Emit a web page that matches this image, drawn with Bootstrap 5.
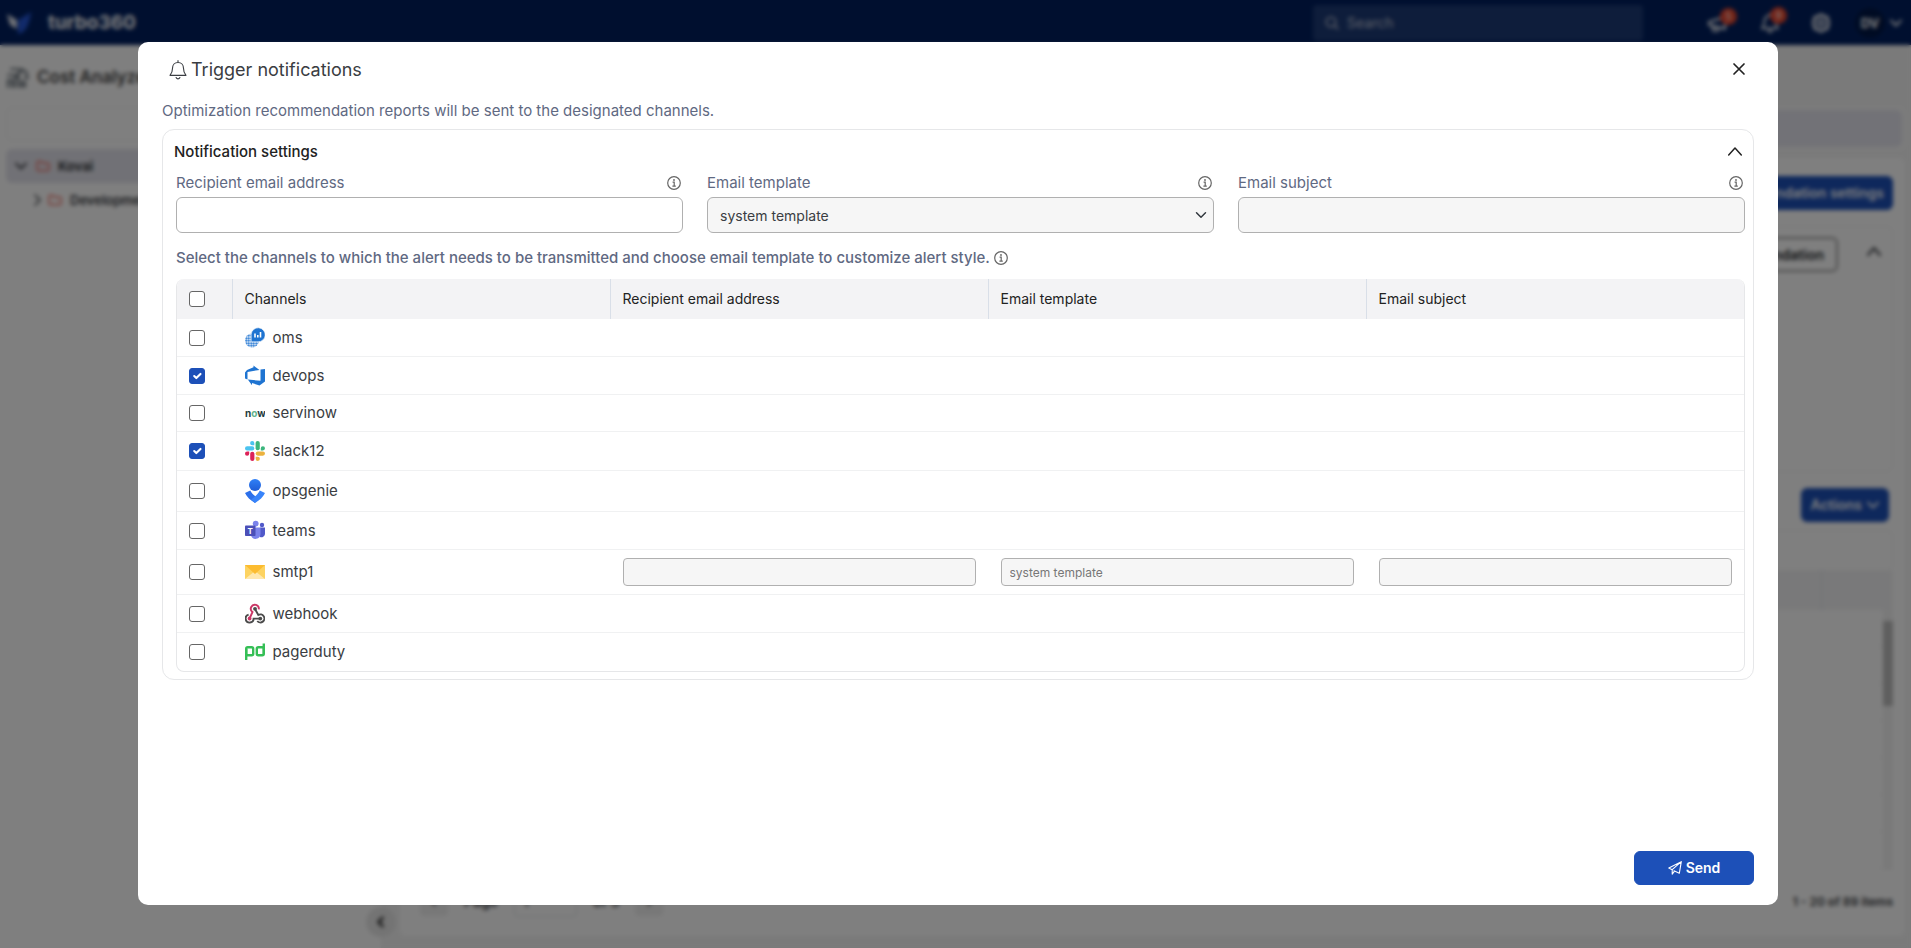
<!DOCTYPE html>
<html lang="en">
<head>
<meta charset="utf-8">
<meta name="viewport" content="width=device-width, initial-scale=1">
<title>Trigger notifications - turbo360</title>
<link href="https://cdn.jsdelivr.net/npm/bootstrap@5.3.0/dist/css/bootstrap.min.css" rel="stylesheet">
<style>
  :root { --ink: #3a3d42; --slate: #5f6982; --brand: #1d50b8; --line: #e6e7e9; }
  body { font-family: Inter, "Open Sans", sans-serif; font-size: 14px; line-height: 20px; color: var(--ink); background: #fff; }
  svg { display: block; flex: none; }
  .stroke { fill: none; stroke: currentColor; stroke-linecap: round; stroke-linejoin: round; }

  /* application behind the dialog */
  .app { height: 100vh; }
  .topbar { height: 45px; background: #001f5f; color: #fff; padding: 0 8px 0 6px; }
  .brand-name { font-size: 19px; }
  .top-search { width: 330px; height: 36px; background: #1c3a76; color: #c0c6d6; margin-right: 64px; border-radius: 4px; }
  .top-search input { background: transparent; border: 0; color: inherit; padding: 0; }
  .top-search input::placeholder { color: #c0c6d6; opacity: 1; }
  .count { position: absolute; top: -6px; right: -8px; width: 17px; height: 17px; border-radius: 50%; background: #e8452c; font-size: 10px; line-height: 17px; text-align: center; }
  .avatar { width: 30px; height: 30px; background: #001746; font-size: 13px; }
  .sidebar { width: 381px; background: #fff; padding: 18px 0 0 6px; }
  .page-name { font-size: 17px; line-height: 28px; color: #444; }
  .side-search { height: 34px; border-color: #f0f0f0; }
  .tree-row { height: 34px; border-radius: 6px; font-size: 13px; }
  .tree-row.active { background: #e3e3ec; }
  .tree-row svg.folder { color: #f0685c; }
  .main-pane { background: #f5f5f5; padding: 62px 6px 12px 19px; }
  .crumb { height: 43px; background: #f9f9f9; padding: 3px; }
  .crumb-fill { background: #e5e5ee; }
  .panel { background: #fff; border-radius: 6px; padding: 18px 12px 15px; }
  .btn-brand { --bs-btn-color: #fff; --bs-btn-bg: var(--brand); --bs-btn-border-color: var(--brand); --bs-btn-hover-color: #fff; --bs-btn-hover-bg: #17439c; --bs-btn-font-size: 14px; --bs-btn-border-radius: 6px; height: 34px; line-height: 20px; font-weight: 600; }
  .box { border: 1px solid #f1f1f1; border-radius: 6px; }
  .summary { height: 246px; padding: 10px 6px; }
  .filter-strip { height: 41px; }
  .btn-ghost { border: 2px solid #999; border-radius: 6px; height: 35px; font-weight: 600; line-height: 20px; font-size: 14px; }
  .grid-head { height: 39px; background: #f3f3f5; padding-right: 71px; }
  .grid-body { flex: 1 1 0; background: repeating-linear-gradient(#fff 0 36px, #f8f8f8 36px 37px); }
  .scroll-track { width: 10px; background: #f4f4f4; padding-top: 11px; }
  .scroll-thumb { height: 85px; background: #bdbdbd; }
  .pager-btn { width: 28px; height: 28px; background: #f0f0f0; border: 0; border-radius: 4px; }
  .pager-input { width: 63px; }
  .pager-total { font-size: 12px; }
  .collapse-btn { position: absolute; right: -15px; bottom: 11px; width: 30px; height: 30px; border: 0; border-radius: 50%; background: #e8e8e8; }

  /* dialog */
  .veil { background: rgba(0, 0, 0, .5); backdrop-filter: blur(2px); padding: 42px 133px 43px 138px; z-index: 1055; }
  .dialog { background: #fff; border-radius: 10px; padding: 16px 24px 20px; }
  .dialog-head { padding: 0 7px; margin-bottom: 17px; height: 24px; }
  .dialog-title { font-size: 18px; line-height: 24px; font-weight: 400; }
  .plain-btn { border: 0; background: transparent; padding: 0; color: #222; }
  .intro { color: var(--slate); font-size: 15px; line-height: 24px; margin-bottom: 6px; }
  .settings { border: 1px solid var(--line); border-radius: 12px; padding: 12px 8px 7px 13px; }
  .settings-head { margin-bottom: 11px; padding-right: 3px; }
  .settings-title { font-size: 15px; line-height: 20px; color: #222; margin-left: -2px; }
  .label-row { padding-right: 2px; }
  .field-label { color: var(--slate); font-size: 15px; }
  .info-dot { color: #666; }
  .field { height: 36px; border: 1px solid #b0b0b0; border-radius: 6px; font-size: 14px; padding: 0 12px; color: var(--ink); background-color: #fff; }
  .field:disabled, .field.muted { background-color: #f6f6f6; opacity: 1; }
  select.field { background-position: right 6px center; background-size: 12px; }
  .field.compact { height: 28px; border-radius: 4px; font-size: 12px; padding: 0 8px; color: #777; }
  .hint { color: var(--slate); font-size: 15px; line-height: 20px; margin: 15px 0 11px; }
  .channel-wrap { border: 1px solid var(--line); border-top: 0; border-radius: 8px; overflow: hidden; }
  .channel-table { table-layout: fixed; margin: 0; color: var(--ink); border-color: #f0f1f2; }
  .channel-table > :not(caption) > * > * { padding: 8px 12px; vertical-align: middle; }
  .channel-table > thead > tr > th { height: 40px; background: #f3f3f5; font-weight: 400; font-size: 14px; padding: 0 12px; border-bottom: 0; color: #222; }
  .channel-table th + th { border-left: 1px solid #d9dfe8; }
  .channel-table td + td { border-left: 1px solid transparent; }
  .channel-table td { font-size: 15px; }
  .channel-table tbody tr:last-child td { border-bottom-color: transparent; }
  .channel-table .pick { width: 55px; }
  .tick.form-check-input { float: none; display: block; width: 16px; height: 16px; margin: 0; border: 1px solid #666; border-radius: 3px; }
  .tick.form-check-input:checked { background-color: var(--brand); border-color: var(--brand); }
  .send-btn { width: 120px; }
</style>
</head>
<body class="overflow-hidden">

<svg width="0" height="0" class="position-absolute" aria-hidden="true">
  <symbol id="i-info" viewBox="0 0 14 14"><circle cx="7" cy="7" r="6.3" fill="none" stroke="currentColor" stroke-width="1.2"/><circle cx="7" cy="4" r=".9" fill="currentColor"/><path d="M5.6 6.2h1.6v4M5.4 10.2h3.4" fill="none" stroke="currentColor" stroke-width="1.2"/></symbol>
  <symbol id="i-down" viewBox="0 0 14 14"><path d="M2 4.5l5 5 5-5" class="stroke" stroke-width="1.8"/></symbol>
  <symbol id="i-bell" viewBox="0 0 16 18"><path d="M8 .6v1.600M8 2.200c-3 0-4.900 2.200-4.900 5 0 3.600-1 5-2.300 6.600h14.400c-1.300-1.600-2.300-3-2.300-6.600 0-2.800-1.900-5-4.900-5z" class="stroke"/><path d="M6.300 15.800c.3.700.9 1.200 1.700 1.200s1.400-.5 1.700-1.200" class="stroke"/></symbol>
  <symbol id="i-folder" viewBox="0 0 14 12"><path d="M1 2.500a1 1 0 0 1 1-1h3l1.500 1.700H12a1 1 0 0 1 1 1v5.300a1 1 0 0 1-1 1H2a1 1 0 0 1-1-1z" class="stroke" stroke-width="1.400"/></symbol>
</svg>

<div class="app d-flex flex-column" aria-hidden="true">
  <header class="topbar d-flex align-items-center">
    <svg width="26" height="24" viewBox="0 0 26 24"><path d="M1 3l10 6v9L4 14z" fill="#dfe3ee"/><path d="M25 1L12 9v14c7-1 11-8 13-22z" fill="#2456d6"/></svg>
    <span class="brand-name fw-bold ms-3 me-auto">turbo360</span>
    <div class="top-search d-flex align-items-center gap-2 px-2">
      <svg class="ms-1" width="14" height="14" viewBox="0 0 14 14"><circle cx="6" cy="6" r="4.700" class="stroke" stroke-width="1.600"/><path d="M9.500 9.500L13 13" class="stroke" stroke-width="1.600"/></svg>
      <input type="search" placeholder="Search" aria-label="Search" tabindex="-1">
    </div>
    <div class="d-flex align-items-center">
      <span class="position-relative me-4"><svg width="22" height="18" viewBox="0 0 22 18"><path d="M2 8l16-5v12L2 11zM6 12v3a2.500 2.500 0 0 0 5 1v-3" class="stroke" stroke-width="2"/></svg><span class="count">5</span></span>
      <span class="position-relative ms-2 me-4"><svg width="18" height="20"><use href="#i-bell" stroke-width="1.600"/></svg><span class="count">9</span></span>
      <svg class="ms-2 me-4" width="20" height="20" viewBox="0 0 20 20"><path d="M10 1.500l2.500 1.700L16 4l1 3 .6 3-.6 3-1 3-3.500.8L10 18.500l-2.500-1.700L4 16l-1-3-.6-3L3 7l1-3 3.500-.8z" class="stroke" stroke-width="2.600"/><circle cx="10" cy="10" r="3" class="stroke" stroke-width="2"/></svg>
      <span class="avatar rounded-circle fw-bold d-flex align-items-center justify-content-center">DV</span>
      <svg class="ms-1" width="14" height="14"><use href="#i-down"/></svg>
    </div>
  </header>

  <div class="d-flex flex-grow-1">
    <aside class="sidebar position-relative">
      <div class="d-flex align-items-center gap-2 mb-3">
        <svg width="23" height="24" viewBox="0 0 23 24" class="text-secondary"><path d="M2 22v-7h4v7M9 22V12h4v10M16 22v-5h3v5M2 10h9l5-6M5 4h8M13 9a4 4 0 1 1 6 4h3" class="stroke" stroke-width="2.200"/></svg>
        <div class="page-name fw-semibold">Cost Analyzer</div>
      </div>
      <input class="form-control side-search mb-2" aria-label="Search resources" tabindex="-1">
      <div class="tree-row active d-flex align-items-center gap-1 fw-bold ps-2"><svg width="14" height="14"><use href="#i-down"/></svg><svg class="folder ms-1 me-1" width="14" height="12"><use href="#i-folder"/></svg>Kovai</div>
      <div class="tree-row d-flex align-items-center gap-1 fw-semibold ps-4"><svg width="14" height="14" viewBox="0 0 14 14"><path d="M5 2l5 5-5 5" class="stroke" stroke-width="1.500"/></svg><svg class="folder me-1" width="14" height="12"><use href="#i-folder"/></svg>Development</div>
      <button class="collapse-btn d-flex align-items-center justify-content-center" tabindex="-1" aria-label="Collapse"><svg width="12" height="12" viewBox="0 0 14 14"><path d="M9 2L4 7l5 5" class="stroke" stroke-width="2.400"/></svg></button>
    </aside>

    <main class="main-pane flex-grow-1 d-flex flex-column">
      <div class="crumb rounded-2 d-flex mb-2"><div class="crumb-fill rounded-2 flex-grow-1"></div></div>
      <section class="panel flex-grow-1 d-flex flex-column">
        <button class="btn btn-brand align-self-end px-2 mb-3" tabindex="-1">Recommendation settings</button>
        <div class="box summary d-flex justify-content-end align-items-start gap-4">
          <button class="btn btn-ghost py-1" tabindex="-1">Recommendation</button>
          <svg class="ms-1 mt-2 me-1" width="16" height="14" viewBox="0 0 14 14"><path d="M1 10l6-7 6 7" class="stroke" stroke-width="2"/></svg>
        </div>
        <div class="d-flex justify-content-end gap-2 pt-3 pb-2 pe-1">
          <button class="btn btn-brand px-2 d-flex align-items-center" tabindex="-1">Actions <svg class="ms-1" width="14" height="14"><use href="#i-down"/></svg></button>
        </div>
        <div class="box filter-strip"></div>
        <div class="grid-head d-flex justify-content-end"><span class="border-end"></span></div>
        <div class="grid-body d-flex justify-content-end"><div class="scroll-track"><div class="scroll-thumb"></div></div></div>
        <div class="d-flex align-items-center gap-3 fw-semibold mt-3 ps-2">
          <button class="pager-btn" tabindex="-1">‹</button>
          <span>Page</span><input class="form-control form-control-sm pager-input" value="1" aria-label="Page number" tabindex="-1"><span>of 5</span>
          <button class="pager-btn" tabindex="-1">›</button>
          <span class="pager-total ms-auto">1 - 20 of 89 items</span>
        </div>
        <div class="pb-1"></div>
      </section>
    </main>
  </div>
</div>

<div class="veil position-fixed top-0 start-0 w-100 h-100 d-flex">
  <div class="dialog flex-grow-1 d-flex flex-column" role="dialog" aria-modal="true" aria-labelledby="dlg-title">
    <div class="dialog-head d-flex align-items-center">
      <svg class="me-1" width="18" height="20"><use href="#i-bell"/></svg>
      <h1 class="dialog-title mb-0 me-auto" id="dlg-title">Trigger notifications</h1>
      <button class="plain-btn" type="button" aria-label="Close"><svg width="16" height="16" viewBox="0 0 16 16"><path d="M3 2l10 10M13 2L3 12" class="stroke" stroke-width="1.700"/></svg></button>
    </div>
    <p class="intro">Optimization recommendation reports will be sent to the designated channels.</p>

    <section class="settings">
      <div class="settings-head d-flex align-items-center justify-content-between">
        <h2 class="settings-title mb-0">Notification settings</h2>
        <button class="plain-btn" type="button" aria-label="Collapse notification settings"><svg width="14" height="14" viewBox="0 0 14 14"><path d="M.7 10L7 3l6.300 7" class="stroke" stroke-width="1.500"/></svg></button>
      </div>

      <div class="row gx-4">
        <div class="col">
          <div class="label-row d-flex align-items-center justify-content-between mb-1">
            <label class="field-label" for="rcpt">Recipient email address</label><svg class="info-dot" width="14" height="14"><use href="#i-info"/></svg>
          </div>
          <input class="form-control field" id="rcpt" type="email">
        </div>
        <div class="col">
          <div class="label-row d-flex align-items-center justify-content-between mb-1">
            <label class="field-label" for="tmpl">Email template</label><svg class="info-dot" width="14" height="14"><use href="#i-info"/></svg>
          </div>
          <select class="form-select field muted" id="tmpl"><option>system template</option></select>
        </div>
        <div class="col">
          <div class="label-row d-flex align-items-center justify-content-between mb-1">
            <label class="field-label" for="subj">Email subject</label><svg class="info-dot" width="14" height="14"><use href="#i-info"/></svg>
          </div>
          <input class="form-control field" id="subj" type="text" disabled>
        </div>
      </div>

      <div class="hint d-flex align-items-center gap-1 fw-medium"><span class="hint-text">Select the channels to which the alert needs to be transmitted and choose email template to customize alert style.</span><svg class="info-dot" width="14" height="14"><use href="#i-info"/></svg></div>

      <div class="channel-wrap">
        <table class="table channel-table">
          <thead>
            <tr><th class="pick" scope="col"><input class="form-check-input tick" type="checkbox" aria-label="Select all channels"></th><th scope="col">Channels</th><th scope="col">Recipient email address</th><th scope="col">Email template</th><th scope="col">Email subject</th></tr>
          </thead>
          <tbody>
            <tr><td><input class="form-check-input tick" type="checkbox" id="c1"></td><td><label class="d-flex align-items-center gap-2" for="c1">
              <svg width="20" height="21" viewBox="0 0 20 21"><defs><pattern id="dots" width="2.500" height="2.500" patternUnits="userSpaceOnUse"><circle cx="1.250" cy="1.250" r="1.050" fill="#1f74d1"/></pattern></defs><circle cx="7" cy="13.500" r="7" fill="url(#dots)"/><path d="M6.200 14.800V7.200A7 7 0 1 1 13 14.800z" fill="#1f74d1" stroke="#fff" stroke-width=".6"/><path d="M10 6.500v4M12.800 8v2.500M15.500 5v5.500" stroke="#fff" stroke-width="1.600"/></svg>oms</label></td><td></td><td></td><td></td></tr>
            <tr><td><input class="form-check-input tick" type="checkbox" id="c2" checked></td><td><label class="d-flex align-items-center gap-2" for="c2">
              <svg width="20" height="21" viewBox="0 0 20 21"><path d="M0 7.500L2 5l6.500-2.700V.6l6 4.300L2.500 7v7.500L0 13.500zM15.500 4.500L20 4v12.500L14.500 20.500 7 18v2.300L2.800 14.500l12.700 1.300z" fill="#1f74d1"/></svg>devops</label></td><td></td><td></td><td></td></tr>
            <tr><td><input class="form-check-input tick" type="checkbox" id="c3"></td><td><label class="d-flex align-items-center gap-2" for="c3">
              <svg width="20" height="20" viewBox="0 0 20 20"><text x="0" y="14" font-family="Inter, sans-serif" font-weight="700" font-size="10" fill="#1d3b3f">n<tspan fill="#62b38d">o</tspan>w</text></svg>servinow</label></td><td></td><td></td><td></td></tr>
            <tr><td><input class="form-check-input tick" type="checkbox" id="c4" checked></td><td><label class="d-flex align-items-center gap-2" for="c4">
              <svg width="20" height="22" viewBox="0 -1 20 22"><g fill="#4bc3ef"><rect x="0" y="5.300" width="9.300" height="4.200" rx="2.100"/><path d="M9.300 4.200H7.300A2.100 2.100 0 1 1 9.300 2.100z"/></g><g fill="#3cb67d"><rect x="10.600" y="0" width="4.200" height="9.300" rx="2.100"/><path d="M15.800 9.400v-2a2.100 2.100 0 1 1 2.100 2z"/></g><g fill="#ebb23e"><rect x="10.700" y="10.500" width="9.300" height="4.200" rx="2.100"/><path d="M10.700 15.800h2a2.100 2.100 0 1 1-2 2.100z"/></g><g fill="#dc2259"><rect x="5.200" y="10.700" width="4.200" height="9.300" rx="2.100"/><path d="M4.200 10.600v2a2.100 2.100 0 1 1-2.100-2z"/></g></svg>slack12</label></td><td></td><td></td><td></td></tr>
            <tr><td><input class="form-check-input tick" type="checkbox" id="c5"></td><td><label class="d-flex align-items-center gap-2" for="c5">
              <svg width="20" height="24" viewBox="0 0 20 24"><defs><linearGradient id="og" x1="0" y1="0" x2="0" y2="1"><stop offset="0" stop-color="#2f80f7"/><stop offset="1" stop-color="#1f5cd6"/></linearGradient></defs><circle cx="10" cy="6" r="6" fill="url(#og)"/><path d="M0 14l5.200-2.600c1.200 2.600 4.200 5.200 7.800 8L10 24C5.300 21.300 1.800 18 0 14z" fill="#2c70ea"/><path d="M20 14l-5.200-2.600c-1.400 3.300-4.800 6.300-8.500 9.100L10 24c4.700-2.700 8.200-6 10-10z" fill="#3884fa"/></svg>opsgenie</label></td><td></td><td></td><td></td></tr>
            <tr><td><input class="form-check-input tick" type="checkbox" id="c6"></td><td><label class="d-flex align-items-center gap-2" for="c6">
              <svg width="20" height="21" viewBox="0 0 20 21"><circle cx="17" cy="5" r="2.200" fill="#5059c9"/><circle cx="10.700" cy="3.600" r="2.900" fill="#7b83eb"/><path d="M15 7.500h5v6.500a3.600 3.600 0 0 1-5 3z" fill="#5059c9"/><path d="M6 7.500h9.500v6.500a4.900 5.200 0 0 1-9.500 1.500z" fill="#7b83eb"/><rect x="0" y="5.500" width="10.500" height="10.500" rx=".8" fill="#4b50b8"/><text x="2.600" y="14" font-family="Inter, sans-serif" font-weight="700" font-size="8" fill="#fff">T</text></svg>teams</label></td><td></td><td></td><td></td></tr>
            <tr><td><input class="form-check-input tick" type="checkbox" id="c7"></td><td><label class="d-flex align-items-center gap-2" for="c7">
              <svg width="20" height="14" viewBox="0 0 20 14"><path d="M0 0h20v14H0z" fill="#fdd361"/><path d="M0 14l10-8 10 8z" fill="#ffe8ae"/><path d="M0 0h20L10 9z" fill="#fcbc30"/></svg>smtp1</label></td>
              <td><input class="form-control field compact" type="text" aria-label="smtp1 recipient email address" disabled></td><td><input class="form-control field compact" type="text" value="system template" aria-label="smtp1 email template" disabled></td><td><input class="form-control field compact" type="text" aria-label="smtp1 email subject" disabled></td></tr>
            <tr><td><input class="form-check-input tick" type="checkbox" id="c8"></td><td><label class="d-flex align-items-center gap-2" for="c8">
              <svg width="20" height="21" viewBox="0 0 20 21" fill="none" stroke-width="1.900"><path d="M13.800 6.300A4 4 0 1 0 7.500 9L4.800 15" stroke="#cb3766"/><circle cx="4.600" cy="15.500" r="1.900" fill="#cb3766"/><path d="M10 6l3.300 6a4 4 0 1 1-1 6" stroke="#4b4b4b"/><circle cx="10" cy="5.800" r="1.900" fill="#4b4b4b"/><path d="M3.600 11.700a4 4 0 1 0 5 3.900H15" stroke="#4b4b4b"/><circle cx="15.300" cy="15.600" r="1.900" fill="#4b4b4b"/></svg>webhook</label></td><td></td><td></td><td></td></tr>
            <tr><td><input class="form-check-input tick" type="checkbox" id="c9"></td><td><label class="d-flex align-items-center gap-2" for="c9">
              <svg width="20" height="21" viewBox="0 0 20 21" fill="none" stroke="#35bf56" stroke-width="2.400"><rect x="1.200" y="6.200" width="7" height="8" rx="1.500"/><line x1="1.200" y1="8" x2="1.200" y2="19"/><rect x="11.800" y="6.200" width="7" height="8" rx="1.500"/><line x1="18.800" y1="2.500" x2="18.800" y2="13"/></svg>pagerduty</label></td><td></td><td></td><td></td></tr>
          </tbody>
        </table>
      </div>
    </section>

    <button class="btn btn-brand send-btn mt-auto align-self-end d-flex align-items-center justify-content-center gap-1" type="button"><svg width="14" height="14" viewBox="0 0 14 14"><path d="M13.300.7L.8 7l3.400 1.700zM13.300.7L4.200 8.700v4.400l2.300-3M13.300.7l-2 11.600-5.300-2.500" class="stroke" stroke-width="1.100"/></svg>Send</button>
  </div>
</div>

<script src="https://cdn.jsdelivr.net/npm/bootstrap@5.3.0/dist/js/bootstrap.bundle.min.js"></script>
</body>
</html>
